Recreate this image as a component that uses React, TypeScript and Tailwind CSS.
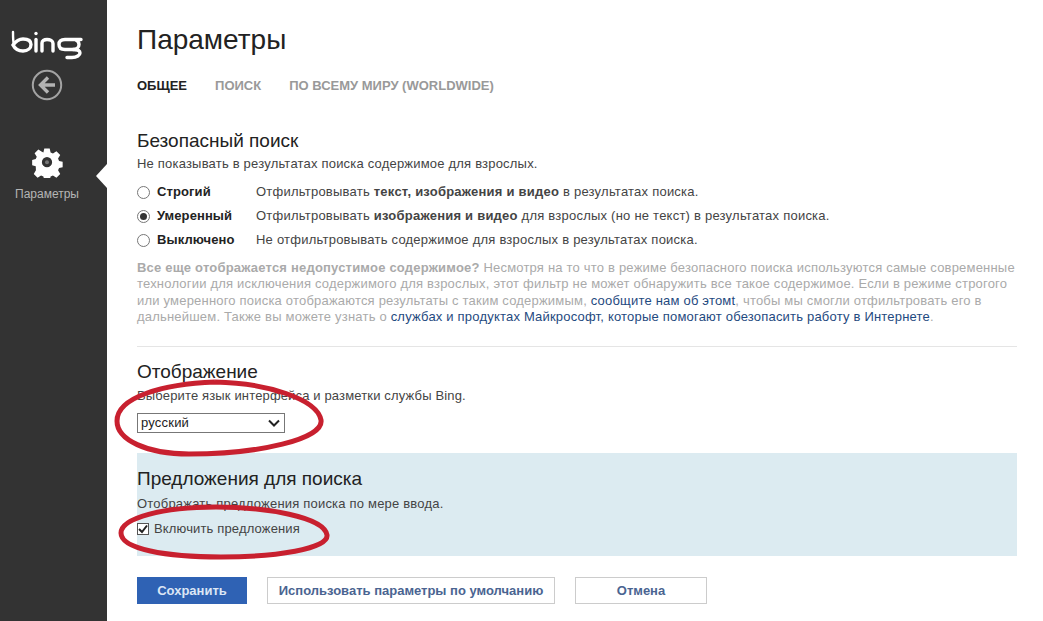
const BingLogo = () => (
  <svg width="72" height="30" viewBox="0 0 72 30" fill="none" stroke="#fff" strokeWidth="3.400" strokeLinecap="round" strokeLinejoin="round">
    <path d="M2 2c0 6 0 10 1 13" strokeWidth="2.400" />
    <path d="M2 15c3-4 6-6 10-6 5 0 8 2 8 5.500S17 21 12 21c-5 0-8-2-10-6" />
    <circle cx="25" cy="3.500" r="1.700" fill="#fff" stroke="none" />
    <path d="M25 9.500V21" />
    <path d="M31 21v-8c0-2 2-3.500 5-3.500s6 1.500 6 4V21" />
    <path d="M70 9.500H54c-4 0-6 2-6 5s2 5 6 5h8c5 0 7 1.500 7 3.500s-3 4.500-8 4.500h-5" />
    <path d="M65 10c2 1 3 2.500 3 4.500 0 3-2.500 5-6 5" />
  </svg>
)

const BackIcon = () => (
  <svg width="32" height="32" viewBox="0 0 32 32" fill="none">
    <circle cx="16" cy="16" r="14.2" stroke="#a3a3a3" strokeWidth="2" />
    <path d="M17 8.500 9.500 16l7.500 7.500M10 16h14" stroke="#b3b3b3" strokeWidth="3.400" />
  </svg>
)

const GearIcon = () => (
  <svg width="32" height="32" viewBox="0 0 32 32">
    <path
      fill="#fff"
      fillRule="evenodd"
      d="M13 1h6l1 4.400 2.600 1.100 3.900-2.400 4.200 4.200-2.400 3.900 1.100 2.600 4 .9v6l-4 1-1.100 2.600 2.400 3.900-4.200 4.200-3.900-2.400-2.600 1.100-1 4.400h-6l-1-4.400-2.600-1.100-3.900 2.400-4.200-4.200 2.400-3.900L3.500 20.700l-4-1v-6l4-.9 1.100-2.600-2.400-3.900 4.200-4.200 3.900 2.400L12 5.400ZM16 10.500a5.700 5.700 0 1 0 0 11.400 5.700 5.700 0 0 0 0-11.400Z"
      transform="translate(1.600 1.600) scale(.9)"
    />
    <circle cx="16" cy="16.200" r="2" fill="#777" />
  </svg>
)

const options = [
  { name: 'Строгий', checked: false, before: 'Отфильтровывать ', bold: 'текст, изображения и видео', after: ' в результатах поиска.' },
  { name: 'Умеренный', checked: true, before: 'Отфильтровывать ', bold: 'изображения и видео', after: ' для взрослых (но не текст) в результатах поиска.' },
  { name: 'Выключено', checked: false, before: 'Не отфильтровывать содержимое для взрослых в результатах поиска.', bold: '', after: '' },
]

export default function App() {
  return (
    <div className="relative flex h-[621px] w-[1043px] overflow-hidden bg-white font-['Liberation_Sans',Arial,sans-serif] text-[13px] text-[#444]">
      {/* Sidebar */}
      <aside className="relative flex w-[107px] shrink-0 flex-col items-center bg-[#333333] pr-[13px]">
        <div className="mt-[30px]"><BingLogo /></div>
        <div className="mt-[9px]"><BackIcon /></div>
        <div className="mt-[45px]"><GearIcon /></div>
        <div className="mt-[8px] text-[12px] leading-[16px] text-[#b5b5b5]">Параметры</div>
        <div className="absolute top-[164px] right-0 h-0 w-0 border-y-[12px] border-r-[11px] border-y-transparent border-r-white" />
      </aside>

      {/* Main */}
      <main className="w-[880px] pl-[30px] box-content">
        <h1 className="mt-[24px] text-[28px] leading-[32px] text-[#222]">Параметры</h1>
        <nav className="mt-[21px] flex gap-[28px] text-[13px] leading-[18px] font-bold text-[#999]">
          <span className="text-[#222]">ОБЩЕЕ</span>
          <span>ПОИСК</span>
          <span>ПО ВСЕМУ МИРУ (WORLDWIDE)</span>
        </nav>

        <h2 className="mt-[35px] text-[19px] leading-[22px] text-[#222]">Безопасный поиск</h2>
        <p className="mt-[4px] leading-[16px] tracking-[0.2px]">Не показывать в результатах поиска содержимое для взрослых.</p>

        <div className="mt-[12px] flex flex-col gap-[8px]">
          {options.map((o) => (
            <div key={o.name} className="flex h-[16px] items-center leading-[16px]">
              <span className="flex h-[13px] w-[13px] shrink-0 items-center justify-center rounded-full border border-[#777] bg-white">
                {o.checked && <span className="h-[7px] w-[7px] rounded-full bg-[#333]" />}
              </span>
              <span className="ml-[7px] w-[99px] shrink-0 font-bold tracking-[0.1px] text-[#222]">{o.name}</span>
              <span className="tracking-[0.23px]">
                {o.before}
                {o.bold && <b>{o.bold}</b>}
                {o.after}
              </span>
            </div>
          ))}
        </div>

        <p className="mt-[12px] text-[13px] leading-[16.4px] tracking-[0.2px] whitespace-nowrap text-[#aaa]">
          <b>Все еще отображается недопустимое содержимое?</b> Несмотря на то что в режиме безопасного поиска используются самые современные
          <br />
          технологии для исключения содержимого для взрослых, этот фильтр не может обнаружить все такое содержимое. Если в режиме строгого
          <br />
          или умеренного поиска отображаются результаты с таким содержимым, <span className="text-[#1f4a80]">сообщите нам об этомt</span>, чтобы мы смогли отфильтровать его в
          <br />
          дальнейшем. Также вы можете узнать о <span className="text-[#1f4a80]">службах и продуктах Майкрософт, которые помогают обезопасить работу в Интернете</span>.
        </p>

        <div className="mt-[20px] h-px bg-[#e5e5e5]" />

        <h2 className="mt-[14px] text-[19px] leading-[22px] text-[#222]">Отображение</h2>
        <p className="mt-[5px] leading-[16px] tracking-[0.15px]">Выберите язык интерфейса и разметки службы Bing.</p>
        <div className="mt-[9px] flex h-[20px] w-[148px] items-center justify-between border border-[#777] bg-white pr-[4px] pl-[3px] text-[13px] text-[#222]">
          <span className="tracking-[0.2px]">русский</span>
          <svg width="12" height="8" viewBox="0 0 12 8" fill="none">
            <path d="M1 1.500 6 6.500 11 1.500" stroke="#222" strokeWidth="2" />
          </svg>
        </div>

        <section className="mt-[20px] h-[103px] bg-[#dcebf1] pt-[15px]">
          <h2 className="text-[19px] leading-[22px] text-[#222]">Предложения для поиска</h2>
          <p className="mt-[6px] leading-[16px] tracking-[0.2px]">Отображать предложения поиска по мере ввода.</p>
          <label className="mt-[9px] flex items-center">
            <span className="flex h-[12px] w-[12px] items-center justify-center border border-[#555] bg-white">
              <svg width="10" height="10" viewBox="0 0 10 10" fill="none">
                <path d="M1 5 4 8 9 1.500" stroke="#222" strokeWidth="2" />
              </svg>
            </span>
            <span className="ml-[5px] leading-[16px] tracking-[0.15px]">Включить предложения</span>
          </label>
        </section>

        <div className="mt-[21px] flex text-[13px] leading-[25px] font-bold text-[#4a6491]">
          <button className="h-[27px] w-[110px] bg-[#2f62b4] text-[#dce6f5]">Сохранить</button>
          <button className="ml-[20px] h-[27px] w-[288px] border border-[#ccc] bg-white">Использовать параметры по умолчанию</button>
          <button className="ml-[20px] h-[27px] w-[132px] border border-[#ccc] bg-white">Отмена</button>
        </div>
      </main>

      {/* Red hand-drawn marks over the page */}
      <svg className="pointer-events-none absolute top-0 left-0" width="1043" height="621" fill="none" stroke="#c8202f">
        <path strokeWidth="5" d="M215 382c52 1 102 17 106 38 3 19-62 34-132 34-42 0-72-14-72-33 0-24 46-37 98-39" />
        <path strokeWidth="5" d="M216 507c50 0 108 10 111 28 2 14-52 22-106 22-55 0-100-8-100-24 0-15 42-26 95-26" />
      </svg>
    </div>
  )
}
